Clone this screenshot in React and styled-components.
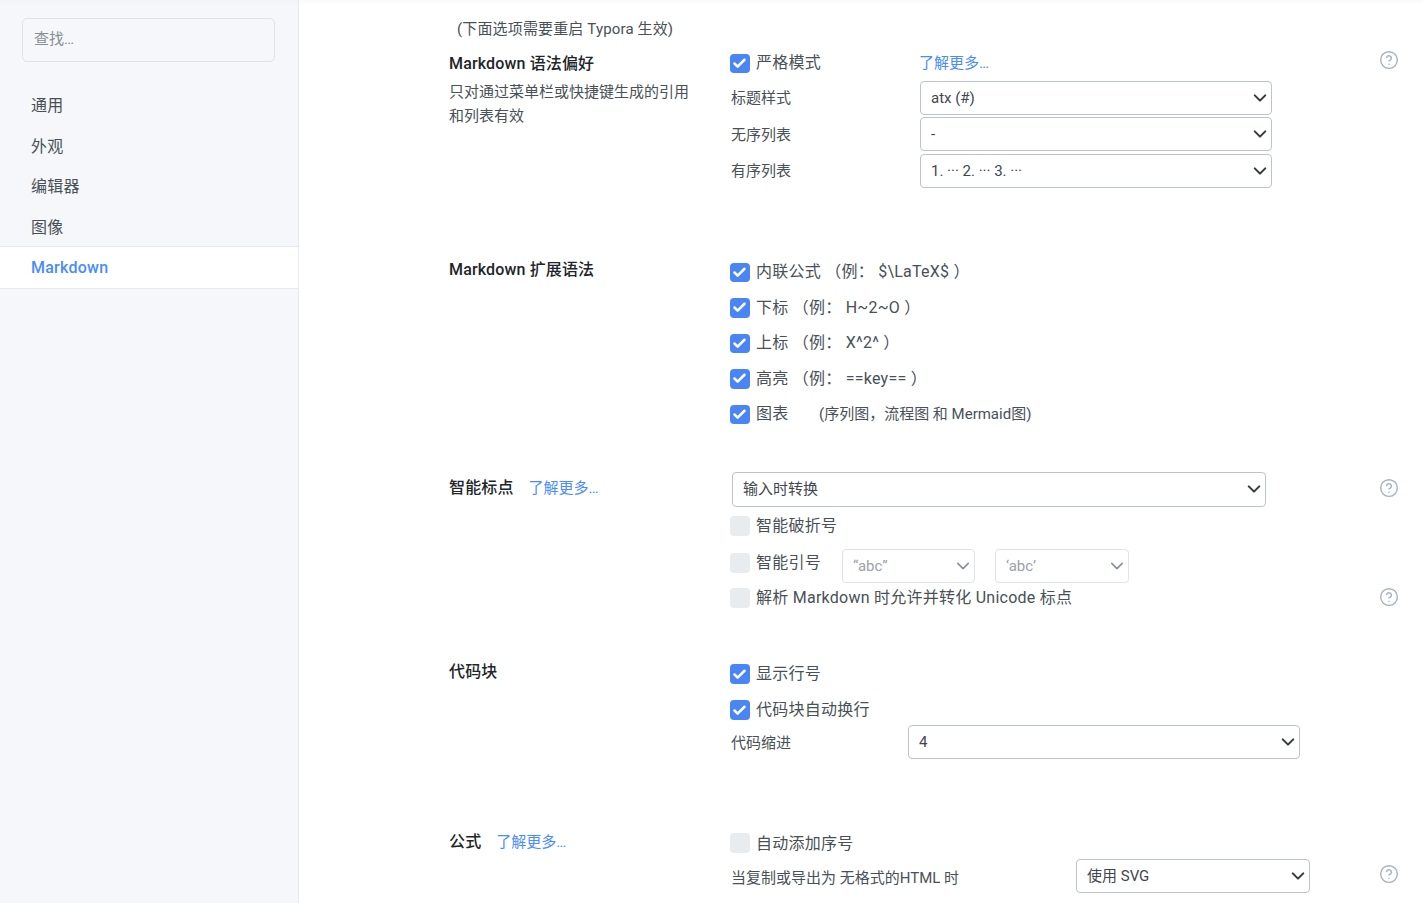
import React from 'react';
import styled, { createGlobalStyle } from 'styled-components';
import { CircleHelp, Check } from 'lucide-react';

const FONT = `Roboto, "Noto Sans CJK SC", sans-serif`;

const Global = createGlobalStyle`
  html, body { margin: 0; padding: 0; background: #fff; }
  body { font-family: ${FONT}; color: #495057; overflow: hidden; }
  * { box-sizing: border-box; }
`;

const Page = styled.div`
  display: flex;
  width: 1423px;
  height: 903px;
  overflow: hidden;
  position: relative;
`;

const TopShade = styled.div`
  position: absolute;
  inset: 0 0 auto 0;
  height: 6px;
  background: linear-gradient(rgba(0,0,0,0.02), rgba(0,0,0,0));
  pointer-events: none;
`;

const Sidebar = styled.aside`
  flex: 0 0 299px;
  height: 100%;
  background: #f5f7fa;
  border-right: 1px solid #e6eaef;
  padding-top: 18px;
`;

const Search = styled.input`
  display: block;
  width: 253px;
  height: 44px;
  margin-left: 22px;
  padding: 0 11px 2px;
  background: transparent;
  border: 1px solid #dde3ea;
  border-radius: 5px;
  font: 15px ${FONT};
  outline: none;
  &::placeholder { color: #868e96; opacity: 1; }
`;

const Nav = styled.nav`
  margin-top: 22px;
`;

const NavItem = styled.div`
  height: ${p => (p.$active ? '43px' : '40.5px')};
  display: flex;
  align-items: center;
  padding-left: 31px;
  font-size: 16px;
  letter-spacing: 0.25px;
  font-weight: ${p => (p.$active ? 500 : 400)};
  color: ${p => (p.$active ? '#4a8bff' : '#495057')};
  background: ${p => (p.$active ? '#fff' : 'transparent')};
  border-top: ${p => (p.$active ? '1px solid #e6eaef' : 'none')};
  border-bottom: ${p => (p.$active ? '1px solid #e6eaef' : 'none')};
`;

const Main = styled.main`
  flex: 1;
  padding: 18px 26px 0 150px;
  min-width: 0;
`;

const Note = styled.div`
  height: 27px;
  padding-left: 8px;
  font-size: 15px;
  line-height: 22px;
  letter-spacing: 0.15px;
  color: #495057;
`;

const Section = styled.section`
  display: grid;
  grid-template-columns: 281px 1fr;
  margin-top: ${p => p.$mt}px;
`;

const Side = styled.div`
  padding-top: ${p => p.$pt}px;
`;

const TitleLine = styled.div`
  display: flex;
  align-items: center;
  gap: 15px;
  height: 24px;
`;

const Title = styled.h3`
  margin: 0;
  font-size: 16px;
  font-weight: 500;
  color: #212529;
  letter-spacing: 0.15px;
`;

const Desc = styled.p`
  margin: 6px 0 0;
  width: 245px;
  font-size: 15px;
  line-height: 24px;
  color: #495057;
`;

const Link = styled.a`
  font-size: 15px;
  color: #4a8bff;
  white-space: nowrap;
  padding-top: ${p => (p.$down ? 2 : 0)}px;
  padding-bottom: ${p => (p.$up ? 4 : 0)}px;
`;

const Body = styled.div`
  display: flex;
  flex-direction: column;
`;

const Row = styled.div`
  display: flex;
  align-items: ${p => p.$align || 'center'};
  height: ${p => p.$h}px;
  margin-top: ${p => p.$mt || 0}px;
`;

const Box = styled.span`
  flex: 0 0 19.5px;
  width: 19.5px;
  height: 19.5px;
  margin-top: 1px;
  border-radius: 4px;
  display: inline-flex;
  align-items: center;
  justify-content: center;
  background: ${p => (p.$on ? '#4a85f6' : '#e9ecef')};
  color: #fff;
`;

const CheckText = styled.span`
  margin-left: 6.5px;
  padding-bottom: ${p => p.$pb ?? 3}px;
  font-size: 16px;
  letter-spacing: 0.25px;
  color: #495057;
  white-space: nowrap;
  width: ${p => (p.$w ? `${p.$w}px` : 'auto')};
`;

const Small = styled.span`
  padding-bottom: 2px;
  font-size: 15px;
  color: #495057;
  white-space: nowrap;
`;

const FieldLabel = styled.span`
  flex: 0 0 ${p => p.$w}px;
  margin-left: 1px;
  padding-top: ${p => p.$pt || 0}px;
  font-size: 15px;
  color: #495057;
  white-space: nowrap;
`;

const SelectWrap = styled.div`
  position: relative;
  flex: 0 0 ${p => p.$w}px;
  height: ${p => p.$h || 34}px;
  margin-left: ${p => p.$ml || 0}px;
  margin-top: ${p => p.$mt || 0}px;
  color: ${p => (p.$off ? '#868e96' : '#343a40')};
`;

const SelectEl = styled.select`
  appearance: none;
  display: block;
  width: 100%;
  height: 100%;
  padding: 0 24px 0 10px;
  font: 15px ${FONT};
  color: ${p => (p.disabled ? '#9aa2ab' : '#3f464d')};
  background: #fff;
  border: 1px solid ${p => (p.disabled ? '#dfe3e8' : '#bcc3cd')};
  border-radius: 4px;
  outline: none;
  opacity: 1;
`;

const Chevron = styled.svg`
  position: absolute;
  right: 5px;
  top: 50%;
  width: 14px;
  height: 14px;
  margin-top: -7px;
  pointer-events: none;
`;

const Help = styled.span`
  margin-left: auto;
  margin-right: -2px;
  margin-top: ${p => p.$mt || 0}px;
  margin-bottom: ${p => p.$mb || 0}px;
  display: inline-flex;
  width: 20px;
  height: 20px;
  color: #a7b1bf;
`;

const Check1 = ({ on }) => (
  <Box $on={on}>{on && <Check size={15} strokeWidth={4} />}</Box>
);

const Sel = ({ w, h, ml, mt, value, off }) => (
  <SelectWrap $w={w} $h={h} $ml={ml} $mt={mt} $off={off}>
    <SelectEl disabled={off} defaultValue={value}>
      <option>{value}</option>
    </SelectEl>
    <Chevron viewBox="0 0 16 16" fill="none" stroke="currentColor" strokeWidth={off ? 1.8 : 2.4} strokeLinecap="round" strokeLinejoin="round">
      <path d="m2 5 6 6 6-6" />
    </Chevron>
  </SelectWrap>
);

const HelpIcon = ({ mt, mb }) => (
  <Help $mt={mt} $mb={mb}><CircleHelp size={20} strokeWidth={1.7} /></Help>
);

const CheckRow = ({ on, h = 36, mt, children, w, pb, help, helpMb, extra }) => (
  <Row $h={h} $mt={mt}>
    <Check1 on={on} />
    <CheckText $w={w} $pb={pb}>{children}</CheckText>
    {extra}
    {help && <HelpIcon mb={helpMb} />}
  </Row>
);

export default function App() {
  return (
    <Page>
      <Global />
      <Sidebar>
        <Search placeholder="查找…" />
        <Nav>
          <NavItem>通用</NavItem>
          <NavItem>外观</NavItem>
          <NavItem>编辑器</NavItem>
          <NavItem>图像</NavItem>
          <NavItem $active>Markdown</NavItem>
        </Nav>
      </Sidebar>
      <Main>
        <Note>(下面选项需要重启 Typora 生效)</Note>
        <Section $mt={0}>
          <Side $pt={5}>
            <TitleLine><Title>Markdown 语法偏好</Title></TitleLine>
            <Desc>只对通过菜单栏或快捷键生成的引用和列表有效</Desc>
          </Side>
          <Body>
            <CheckRow on w={163} pb={5} help helpMb={6} extra={<Link $up>了解更多…</Link>}>严格模式</CheckRow>
            <Row $h={36} $align="flex-start">
              <FieldLabel $w={189} $pt={5}>标题样式</FieldLabel>
              <Sel w={352} value="atx (#)" />
            </Row>
            <Row $h={37} $align="flex-start">
              <FieldLabel $w={189} $pt={6}>无序列表</FieldLabel>
              <Sel w={352} value="-" />
            </Row>
            <Row $h={36} $align="flex-start">
              <FieldLabel $w={189} $pt={5}>有序列表</FieldLabel>
              <Sel w={352} value="1. ··· 2. ··· 3. ···" />
            </Row>
          </Body>
        </Section>

        <Section $mt={64}>
          <Side $pt={2}>
            <TitleLine><Title>Markdown 扩展语法</Title></TitleLine>
          </Side>
          <Body>
            <CheckRow on h={35.5}>内联公式 （例： $\LaTeX$ ）</CheckRow>
            <CheckRow on h={35.5}>下标 （例： H~2~O ）</CheckRow>
            <CheckRow on h={35.5}>上标 （例： X^2^ ）</CheckRow>
            <CheckRow on h={35.5}>高亮 （例： ==key== ）</CheckRow>
            <CheckRow on h={35.5} w={63} extra={<Small>(序列图，流程图 和 Mermaid图)</Small>}>图表</CheckRow>
          </Body>
        </Section>

        <Section $mt={40}>
          <Side $pt={2}>
            <TitleLine>
              <Title>智能标点</Title>
              <Link $down>了解更多…</Link>
            </TitleLine>
          </Side>
          <Body>
            <Row $h={36} $align="flex-start">
              <Sel w={534} h={35} ml={2} value="输入时转换" />
              <HelpIcon mt={6} />
            </Row>
            <CheckRow>智能破折号</CheckRow>
            <Row $h={38}>
              <Check1 />
              <CheckText $w={86}>智能引号</CheckText>
              <Sel w={133} mt={6} value="“abc”" off />
              <Sel w={134} ml={20} mt={6} value="‘abc’" off />
            </Row>
            <CheckRow h={30} mt={1} help helpMb={2}>解析 Markdown 时允许并转化 Unicode 标点</CheckRow>
          </Body>
        </Section>

        <Section $mt={43}>
          <Side $pt={2}>
            <TitleLine><Title>代码块</Title></TitleLine>
          </Side>
          <Body>
            <CheckRow on>显示行号</CheckRow>
            <CheckRow on>代码块自动换行</CheckRow>
            <Row $h={34} $mt={-3}>
              <FieldLabel $w={177}>代码缩进</FieldLabel>
              <Sel w={392} value="4" />
            </Row>
          </Body>
        </Section>

        <Section $mt={66}>
          <Side $pt={3}>
            <TitleLine>
              <Title>公式</Title>
              <Link $down>了解更多…</Link>
            </TitleLine>
          </Side>
          <Body>
            <CheckRow pb={2}>自动添加序号</CheckRow>
            <Row $h={34} $mt={-2}>
              <FieldLabel $w={345} $pt={2}>当复制或导出为 无格式的HTML 时</FieldLabel>
              <Sel w={234} value="使用 SVG" />
              <HelpIcon mb={4} />
            </Row>
          </Body>
        </Section>
      </Main>
      <TopShade />
    </Page>
  );
}
